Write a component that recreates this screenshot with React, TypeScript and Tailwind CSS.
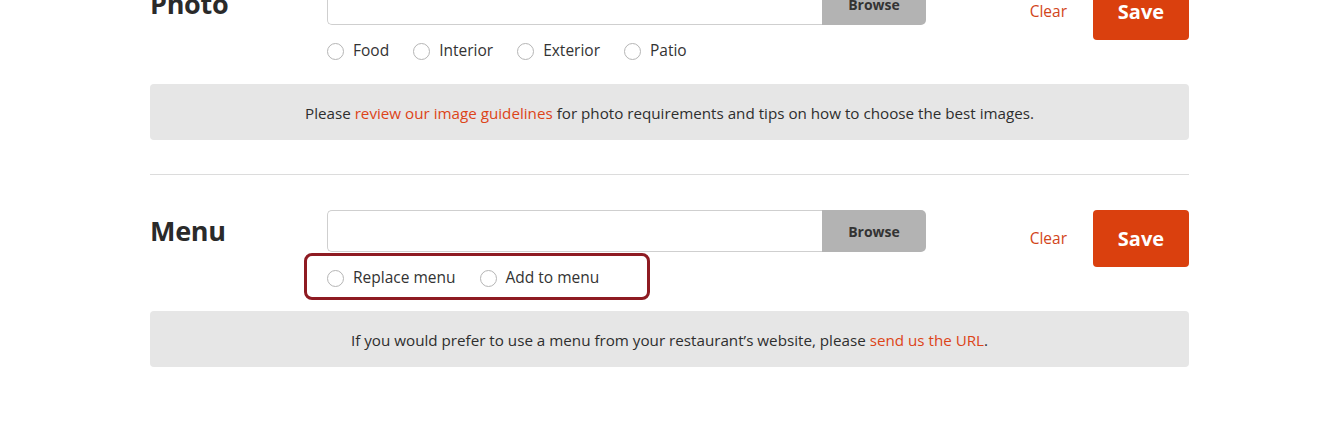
import React from "react";

function Radio({ label }: { label: string }) {
  return (
    <label className="flex items-center gap-[9px] text-[15.5px] text-[#333]">
      <span className="w-[17px] h-[17px] rounded-full border border-[#b5b5b5] bg-white" />
      <span>{label}</span>
    </label>
  );
}

function Section({
  title,
  options,
  highlight,
  info,
}: {
  title: string;
  options: string[];
  highlight?: boolean;
  info: React.ReactNode;
}) {
  return (
    <div>
      <div className="flex">
        <div className="w-[177px] h-[42px] flex items-center text-[27px] font-bold text-[#2a2a2a] tracking-[-0.3px]">
          {title}
        </div>
        <div className="flex flex-col">
          <div className="flex h-[42px] w-[599px]">
            <div className="flex-1 border border-[#cfcfcf] border-r-0 rounded-l-[5px] bg-white" />
            <button className="w-[104px] bg-[#b3b3b3] rounded-r-[5px] text-[14px] font-bold text-[#333]">
              Browse
            </button>
          </div>
          <div className="relative flex gap-[24px] h-[52px] items-center">
            {options.map((o) => (
              <Radio key={o} label={o} />
            ))}
            {highlight && (
              <div className="absolute left-[-23px] top-[1px] w-[346px] h-[47px] border-[3px] border-[#8e1b22] rounded-[8px]" />
            )}
          </div>
        </div>
        <div className="flex-1 flex justify-end items-start">
          <span className="mt-[17px] mr-[26px] text-[15.5px] text-[#d2451a]">Clear</span>
          <button className="w-[96px] h-[57px] bg-[#da400e] rounded-[4px] text-white text-[20px] font-bold">
            Save
          </button>
        </div>
      </div>
      <div className="mt-[7px] h-[56px] pt-[2px] rounded-[4px] bg-[#e6e6e6] flex items-center justify-center text-[15.2px] text-[#2e2e2e]">
        {info}
      </div>
    </div>
  );
}

export default function App() {
  return (
    <div
      className="w-[1340px] h-[430px] overflow-hidden bg-white"
      style={{ fontFamily: '"Open Sans", "Noto Sans", sans-serif' }}
    >
      <div className="w-[1039px] ml-[150px] mt-[-17px]">
        <Section
          title="Photo"
          options={["Food", "Interior", "Exterior", "Patio"]}
          info={
            <span>
              Please <span className="text-[#dd4418]">review our image guidelines</span> for photo
              requirements and tips on how to choose the best images.
            </span>
          }
        />
        <div className="mt-[34px] border-t border-[#dcdcdc]" />
        <div className="mt-[35px]">
          <Section
            title="Menu"
            options={["Replace menu", "Add to menu"]}
            highlight
            info={
              <span>
                If you would prefer to use a menu from your restaurant’s website, please{" "}
                <span className="text-[#dd4418]">send us the URL</span>.
              </span>
            }
          />
        </div>
      </div>
    </div>
  );
}
